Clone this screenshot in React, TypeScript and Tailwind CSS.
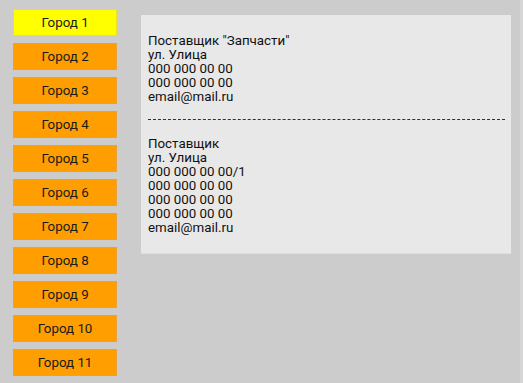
const cities = Array.from({ length: 11 }, (_, i) => `Город ${i + 1}`);

const first = ['Поставщик "Запчасти"', "ул. Улица", "000 000 00 00", "000 000 00 00", "email@mail.ru"];
const second = [
  "Поставщик",
  "ул. Улица",
  "000 000 00 00/1",
  "000 000 00 00",
  "000 000 00 00",
  "000 000 00 00",
  "email@mail.ru",
];

export default function App() {
  return (
    <div
      className="flex h-[383px] w-[523px] bg-[#cccccc] text-[13.33px] leading-[14px]"
      style={{ fontFamily: "Roboto, 'Liberation Sans', sans-serif" }}
    >
      <div className="flex w-[520px] items-start">
        <nav className="ml-[13px] mt-[9px] flex w-[104px] flex-col gap-[7px]">
          {cities.map((c, i) => (
            <button
              key={c}
              className={
                i === 0
                  ? "h-[27px] w-full border border-[#f0e020] bg-[#ffff00] text-center text-[13.33px] text-[#1a1a1a]"
                  : "h-[27px] w-full border border-[#eba133] bg-[#ff9e00] text-center text-[13.33px] text-[#1a1a1a]"
              }
            >
              {c}
            </button>
          ))}
        </nav>
        <div className="ml-[24px] mt-[15px] h-[239px] w-[370px] border-b border-[#dedede] bg-[#e8e8e8] px-[7px] pt-[19px] text-[#111111]">
          {first.map((l, i) => (
            <div key={i} className="h-[14px]">
              {l}
            </div>
          ))}
          <div className="mt-[15px] mb-[17px] mr-[-1px] h-0 border-t border-dashed border-[#1020e0]" />
          {second.map((l, i) => (
            <div key={i} className="h-[14px]">
              {l}
            </div>
          ))}
        </div>
      </div>
      <div className="flex-1 bg-[#d6d6d6]" />
    </div>
  );
}
